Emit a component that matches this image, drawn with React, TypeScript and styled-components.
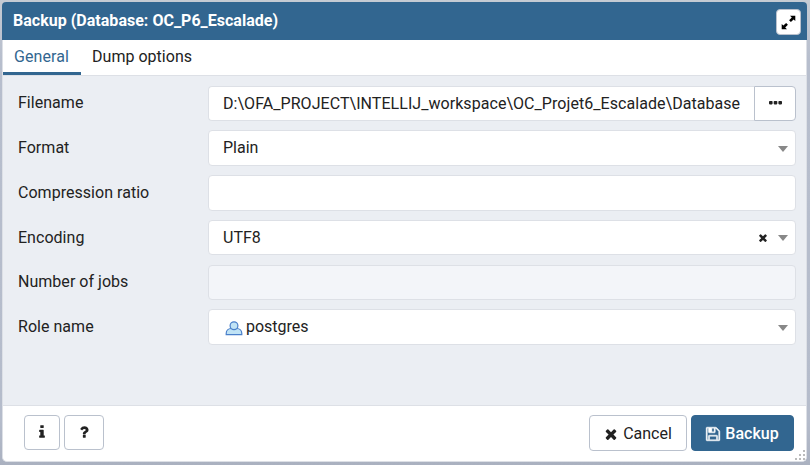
import React from "react";
import styled, { createGlobalStyle } from "styled-components";

const GlobalStyle = createGlobalStyle`
  *, *::before, *::after { box-sizing: border-box; }
  body {
    margin: 0;
    background: #b5bccb;
    color: #222222;
    font: 16px/24px Roboto, "Liberation Sans", sans-serif;
  }
  button, input { font: inherit; color: inherit; }
`;

const Backdrop = styled.div`
  height: 465px;
  padding: 2px 3px 3px 2px;
  background: linear-gradient(180deg, #c5cbd3 0, #b7becd 60px, #b5bccb 420px, #aab1c0 465px);
`;

const Dialog = styled.section`
  position: relative;
  height: 460px;
  display: flex;
  flex-direction: column;
  background: #fff;
  border: solid #dde0e6;
  border-width: 0 1px 1px;
  border-radius: 5px;
`;

const Header = styled.header`
  height: 38px;
  flex: none;
  margin: 0 -1px;
  padding: 0 6px 0 11px;
  display: flex;
  align-items: center;
  justify-content: space-between;
  background: #326690;
  border-radius: 4px 4px 0 0;
  color: #fff;
`;

const Title = styled.h1`
  margin: 0;
  font-size: 16px;
  line-height: 24px;
  font-weight: 700;
  letter-spacing: 0.02px;
`;

const MaximizeButton = styled.button`
  width: 25px;
  height: 26px;
  margin-top: 2px;
  padding: 0;
  display: flex;
  align-items: center;
  justify-content: center;
  background: #fff;
  border: 1px solid #bac1cd;
  border-radius: 4px;
  color: #000;
`;

const Tabs = styled.nav`
  height: 36px;
  flex: none;
  display: flex;
  border-bottom: 1px solid #dde0e6;
`;

const Tab = styled.button<{ $active?: boolean }>`
  height: 35px;
  padding: 2px ${(p) => (p.$active ? 12 : 11)}px 0 11px;
  background: none;
  border: 0;
  border-bottom: 3px solid ${(p) => (p.$active ? "#326690" : "transparent")};
  color: ${(p) => (p.$active ? "#326690" : "#222222")};
  line-height: 24px;
  letter-spacing: ${(p) => (p.$active ? 0.09 : 0.02)}px;
  white-space: nowrap;
`;

const Form = styled.div`
  flex: 1;
  padding: 9.6px 10px 0 15px;
  display: flex;
  flex-direction: column;
  gap: 9.15px;
  background: #ebeef3;
`;

const Row = styled.label`
  height: 35.6px;
  display: grid;
  grid-template-columns: 190px 1fr;
`;

const Label = styled.span`
  padding-top: 5.85px;
  letter-spacing: 0.03px;
`;

const Field = styled.span<{ $disabled?: boolean }>`
  display: flex;
  align-items: center;
  min-width: 0;
  padding: 0 7px 0 14px;
  background: ${(p) => (p.$disabled ? "#f3f5f9" : "#fff")};
  border: 1px solid #dde0e6;
  border-radius: 4px;
`;

const Value = styled.span`
  flex: 1;
  white-space: nowrap;
  overflow: hidden;
`;

const FileGroup = styled.span`
  display: flex;
  min-width: 0;
`;

const FileField = styled(Field)`
  flex: 1;
  padding-top: 1px;
  letter-spacing: 0.055px;
  border-right: 0;
  border-radius: 4px 0 0 4px;
`;

const BrowseButton = styled.button`
  width: 42px;
  padding: 0 0 1px;
  display: flex;
  align-items: center;
  justify-content: center;
  background: #fff;
  border: 1px solid #bac1cd;
  border-radius: 0 4px 4px 0;
`;

const Clear = styled.span`
  display: flex;
  margin-right: 11px;
`;

const Caret = styled.span`
  border: solid transparent;
  border-width: 6px 5px 0;
  border-top-color: #888;
  margin-top: 1px;
`;

const RoleIcon = styled.svg`
  width: 18px;
  height: 16px;
  margin: 1px 3px 0 2px;
`;

const Footer = styled.footer`
  height: 56px;
  flex: none;
  padding: 9px 12px 9px 21px;
  display: flex;
  gap: 4px;
  border-top: 1px solid #dde0e6;
  border-radius: 0 0 4px 4px;
`;

const Spacer = styled.span`
  flex: 1;
`;

const Button = styled.button<{ $width: number; $primary?: boolean }>`
  width: ${(p) => p.$width}px;
  height: ${(p) => (p.$width > 50 ? 36 : 35)}px;
  padding: ${(p) => (p.$width > 50 ? "1px 1px 0 0" : "0 0 1px")};
  display: flex;
  align-items: center;
  justify-content: center;
  gap: 4px;
  background: ${(p) => (p.$primary ? "#326690" : "#fff")};
  border: 1px solid ${(p) => (p.$primary ? "#326690" : "#bac1cd")};
  border-radius: 4px;
  color: ${(p) => (p.$primary ? "#fff" : "#222222")};
  font-weight: ${(p) => (p.$primary ? 500 : 400)};
`;

const Grip = styled.svg`
  position: absolute;
  right: 1px;
  bottom: 1px;
`;

const paths = {
  times:
    "M1490 1322q0 40-28 68l-136 136q-28 28-68 28t-68-28l-294-294-294 294q-28 28-68 28t-68-28l-136-136q-28-28-28-68t28-68l294-294-294-294q-28-28-28-68t28-68l136-136q28-28 68-28t68 28l294 294 294-294q28-28 68-28t68 28l136 136q28 28 28 68t-28 68l-294 294 294 294q28 28 28 68z",
  save: "M512 1536h768v-384h-768v384zm896 0h128v-896q0-14-10-38.5t-20-34.5l-281-281q-10-10-34-20t-39-10v416q0 40-28 68t-68 28h-576q-40 0-68-28t-28-68v-416h-128v1280h128v-416q0-40 28-68t68-28h832q40 0 68 28t28 68v416zm-384-928v-320q0-13-9.5-22.5t-22.5-9.5h-192q-13 0-22.5 9.5t-9.5 22.5v320q0 13 9.5 22.5t22.5 9.5h192q13 0 22.5-9.5t9.5-22.5zm640 32v928q0 40-28 68t-68 28h-1344q-40 0-68-28t-28-68v-1344q0-40 28-68t68-28h928q40 0 88 20t76 48l280 280q28 28 48 76t20 88z",
  info: "M1216 1344v128q0 26-19 45t-45 19h-512q-26 0-45-19t-19-45v-128q0-26 19-45t45-19h64v-384h-64q-26 0-45-19t-19-45v-128q0-26 19-45t45-19h384q26 0 45 19t19 45v576h64q26 0 45 19t19 45zm-128-1152v192q0 26-19 45t-45 19h-256q-26 0-45-19t-19-45v-192q0-26 19-45t45-19h256q26 0 45 19t19 45z",
  question:
    "M1088 1256v240q0 16-12 28t-28 12h-240q-16 0-28-12t-12-28v-240q0-16 12-28t28-12h240q16 0 28 12t12 28zm316-600q0 54-15.5 101t-35 76.5-55 59.5-57.5 43.5-61 35.5q-41 23-68.5 65t-27.5 67q0 17-12 32.5t-28 15.5h-240q-15 0-25.5-18.5t-10.5-37.5v-45q0-83 65-156.5t143-108.5q59-27 84-56t25-76q0-42-46.5-74t-107.5-32q-65 0-108 29-35 25-107 115-13 16-31 16-12 0-25-8l-164-125q-13-10-15.5-25t5.5-28q160-266 464-266 80 0 161 31t146 83 106 127.5 41 158.5z",
};

interface IconProps {
  name: keyof typeof paths;
  size?: number;
  box?: string;
  weight?: number;
}

function Icon({ name, size = 16, box = "0 0 1792 1792", weight = 0 }: IconProps) {
  return (
    <svg
      width={size}
      height={size}
      viewBox={box}
      fill="currentColor"
      stroke="currentColor"
      strokeWidth={weight}
      aria-hidden="true"
    >
      <path d={paths[name]} />
    </svg>
  );
}

export default function App() {
  return (
    <>
      <GlobalStyle />
      <Backdrop>
        <Dialog>
          <Header>
            <Title>Backup (Database: OC_P6_Escalade)</Title>
            <MaximizeButton aria-label="Maximize">
              <svg width="15" height="15" viewBox="0 0 15 15" fill="currentColor">
                <path d="M9 .7h5.300V6l-1.700-1.600-2.700 2.600-1.800-1.700 2.700-2.700zM6 14.300H.7V9l1.700 1.600 2.700-2.600 1.800 1.700-2.700 2.700z" />
              </svg>
            </MaximizeButton>
          </Header>
          <Tabs>
            <Tab $active>General</Tab>
            <Tab>Dump options</Tab>
          </Tabs>
          <Form>
            <Row>
              <Label>Filename</Label>
              <FileGroup>
                <FileField>
                  <Value>D:\OFA_PROJECT\INTELLIJ_workspace\OC_Projet6_Escalade\Database</Value>
                </FileField>
                <BrowseButton aria-label="Browse">
                  <svg width="13" height="4" viewBox="0 0 13 4" fill="currentColor">
                    <rect width="3.6" height="3.4" rx="0.8" />
                    <rect x="4.7" width="3.6" height="3.4" rx="0.8" />
                    <rect x="9.4" width="3.6" height="3.4" rx="0.8" />
                  </svg>
                </BrowseButton>
              </FileGroup>
            </Row>
            <Row>
              <Label>Format</Label>
              <Field>
                <Value>Plain</Value>
                <Caret />
              </Field>
            </Row>
            <Row>
              <Label>Compression ratio</Label>
              <Field />
            </Row>
            <Row>
              <Label>Encoding</Label>
              <Field>
                <Value>UTF8</Value>
                <Clear>
                  <Icon name="times" size={8} box="280 320 1240 1240" />
                </Clear>
                <Caret />
              </Field>
            </Row>
            <Row>
              <Label>Number of jobs</Label>
              <Field $disabled />
            </Row>
            <Row>
              <Label>Role name</Label>
              <Field>
                <RoleIcon viewBox="0 0 18 16" fill="#c0e3f5" stroke="#4a7fca" strokeWidth="1.2">
                  <path d="M1.2 14.6v-1c0-3 2.200-5.100 4.800-5.100h6c2.600 0 4.800 2.100 4.800 5.100v1z" />
                  <circle cx="9" cy="5.700" r="3.900" />
                </RoleIcon>
                <Value>postgres</Value>
                <Caret />
              </Field>
            </Row>
          </Form>
          <Footer>
            <Button $width={36} aria-label="Info">
              <Icon name="info" />
            </Button>
            <Button $width={40} aria-label="Help">
              <Icon name="question" />
            </Button>
            <Spacer />
            <Button $width={98}>
              <Icon name="times" />
              Cancel
            </Button>
            <Button $width={103} $primary>
              <Icon name="save" weight={50} />
              Backup
            </Button>
          </Footer>
          <Grip width="10" height="10" viewBox="0 0 10 10" fill="#bbb">
            <path d="M8 0h2v2H8zM4 4h2v2H4zM8 4h2v2H8zM0 8h2v2H0zM4 8h2v2H4zM8 8h2v2H8z" />
          </Grip>
        </Dialog>
      </Backdrop>
    </>
  );
}
